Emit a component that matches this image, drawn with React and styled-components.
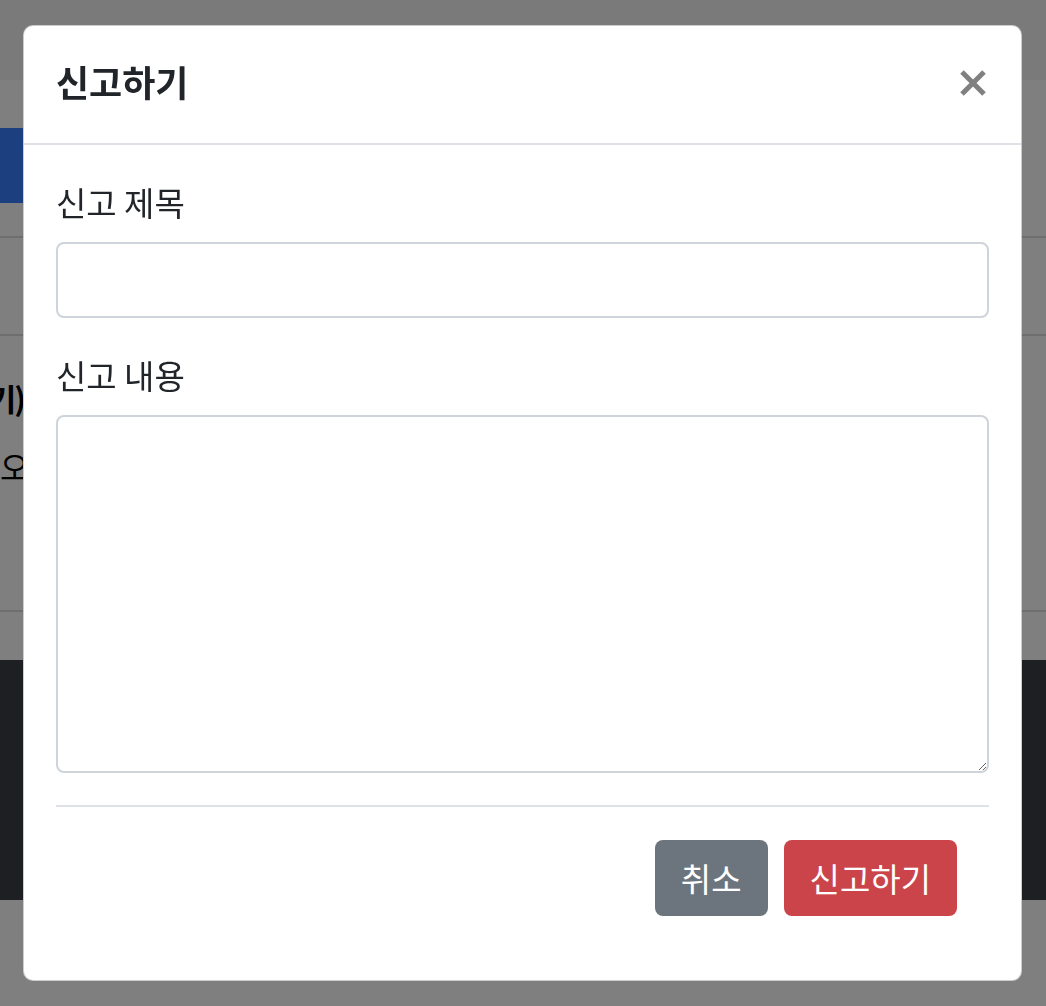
import React from 'react';
import styled, {createGlobalStyle} from 'styled-components';


const GlobalStyle = createGlobalStyle`
    html, body {
        margin: 0;
        padding: 0;
        background: #fff;
    }
    body {
        font-family: "Noto Sans CJK KR", "Noto Sans", sans-serif;
        color: #212529;
    }
    * {
        box-sizing: border-box;
    }
`;


export default () => {

    return(
        <>
            <GlobalStyle/>
            <Page>
                <Nav/>
                <BlueRow>
                    <BlueButton/>
                </BlueRow>
                <TabBar/>
                <Article>
                    <EdgeLine>(신고하기)</EdgeLine>
                    <Line>오늘도 좋은 하루 보내세요.</Line>
                </Article>
                <Footer/>
            </Page>

            <Backdrop>
                <Dialog>
                    <Header>
                        <Title>신고하기</Title>
                        <CloseButton aria-label="닫기">
                            <svg width="26" height="26" viewBox="0 0 26 26">
                                <path d="M2 2 L24 24 M24 2 L2 24" stroke="#808080" strokeWidth="5" fill="none"/>
                            </svg>
                        </CloseButton>
                    </Header>

                    <Body>
                        <Group>
                            <Label htmlFor="report-title">신고 제목</Label>
                            <Input id="report-title" type="text"/>
                        </Group>
                        <Group last>
                            <Label htmlFor="report-content">신고 내용</Label>
                            <TextArea id="report-content"/>
                        </Group>

                        <Divider/>

                        <Actions>
                            <Button variant="secondary">취소</Button>
                            <Button variant="danger">신고하기</Button>
                        </Actions>
                    </Body>
                </Dialog>
            </Backdrop>
        </>
    );

};


// page behind the modal

const Page = styled.div`
    min-height: 1006px;
    display: flex;
    flex-direction: column;
`;

const Nav = styled.div`
    height: 80px;
    background-color: #f5f5f5;
`;

const BlueRow = styled.div`
    padding-top: 48px;
    height: 156px;
`;

const BlueButton = styled.div`
    width: 200px;
    height: 75px;
    background-color: #367fff;
`;

const TabBar = styled.div`
    height: 100px;
    border-top: 2px solid #dcdcdc;
    border-bottom: 2px solid #dcdcdc;
`;

const Article = styled.div`
    height: 276px;
    padding-top: 38px;
    border-bottom: 2px solid #dcdcdc;
`;

const EdgeLine = styled.div`
    width: 24px;
    display: flex;
    justify-content: flex-end;
    overflow: hidden;
    white-space: nowrap;
    font-size: 31px;
    line-height: 48px;
    font-weight: 700;
    letter-spacing: -2px;
    color: #000;
`;

const Line = styled.div`
    margin-top: 20px;
    white-space: nowrap;
    font-size: 32px;
    line-height: 48px;
    color: #000;
`;

const Footer = styled.div`
    margin-top: 48px;
    height: 240px;
    background-color: #3d3f46;
`;


// modal

const Backdrop = styled.div`
    position: fixed;
    inset: 0;
    background-color: rgba(0, 0, 0, .5);
    padding: 25px 0 0 23px;
`;

const Dialog = styled.div`
    width: 999px;
    height: 956px;
    background-color: #fff;
    border: 1px solid rgba(0, 0, 0, .2);
    border-radius: 10px;
    display: flex;
    flex-direction: column;
`;

const Header = styled.div`
    height: 119px;
    padding: 0 35px 0 32px;
    border-bottom: 2px solid #dee2e6;
    display: flex;
    align-items: center;
    justify-content: space-between;
`;

const Title = styled.h5`
    margin: 0 0 8px 0;
    font-size: 36px;
    font-weight: 700;
    line-height: 54px;
    color: #212529;
`;

const CloseButton = styled.button`
    border: 0;
    padding: 0;
    margin: 0 0 4px 0;
    background: transparent;
    width: 26px;
    height: 26px;
    display: flex;
    cursor: pointer;
`;

const Body = styled.div`
    padding: 33px 32px 0 32px;
    display: flex;
    flex-direction: column;
`;

const Group = styled.div`
    display: flex;
    flex-direction: column;
    margin-bottom: ${props => props.last ? '0' : '33px'};
`;

const Label = styled.label`
    font-size: 33px;
    line-height: 48px;
    margin-bottom: 16px;
    color: #212529;
`;

const Input = styled.input`
    height: 76px;
    border: 2px solid #ced4da;
    border-radius: 8px;
    font-family: inherit;
    font-size: 32px;
    padding: 0 24px;
    outline: none;
`;

const TextArea = styled.textarea`
    height: 358px;
    border: 2px solid #ced4da;
    border-radius: 8px;
    font-family: inherit;
    font-size: 32px;
    padding: 12px 24px;
    outline: none;
`;

const Divider = styled.div`
    margin-top: 32px;
    height: 2px;
    background-color: #dee2e6;
`;

const Actions = styled.div`
    padding: 33px 32px 0 0;
    display: flex;
    justify-content: flex-end;
    gap: 16px;
`;

const Button = styled.button`
    height: 76px;
    padding: 0 26px;
    border: 0;
    border-radius: 8px;
    font-family: inherit;
    font-size: 33px;
    color: #fff;
    background-color: ${props => props.variant === 'danger' ? '#cb444a' : '#6c757d'};
    cursor: pointer;
`;
